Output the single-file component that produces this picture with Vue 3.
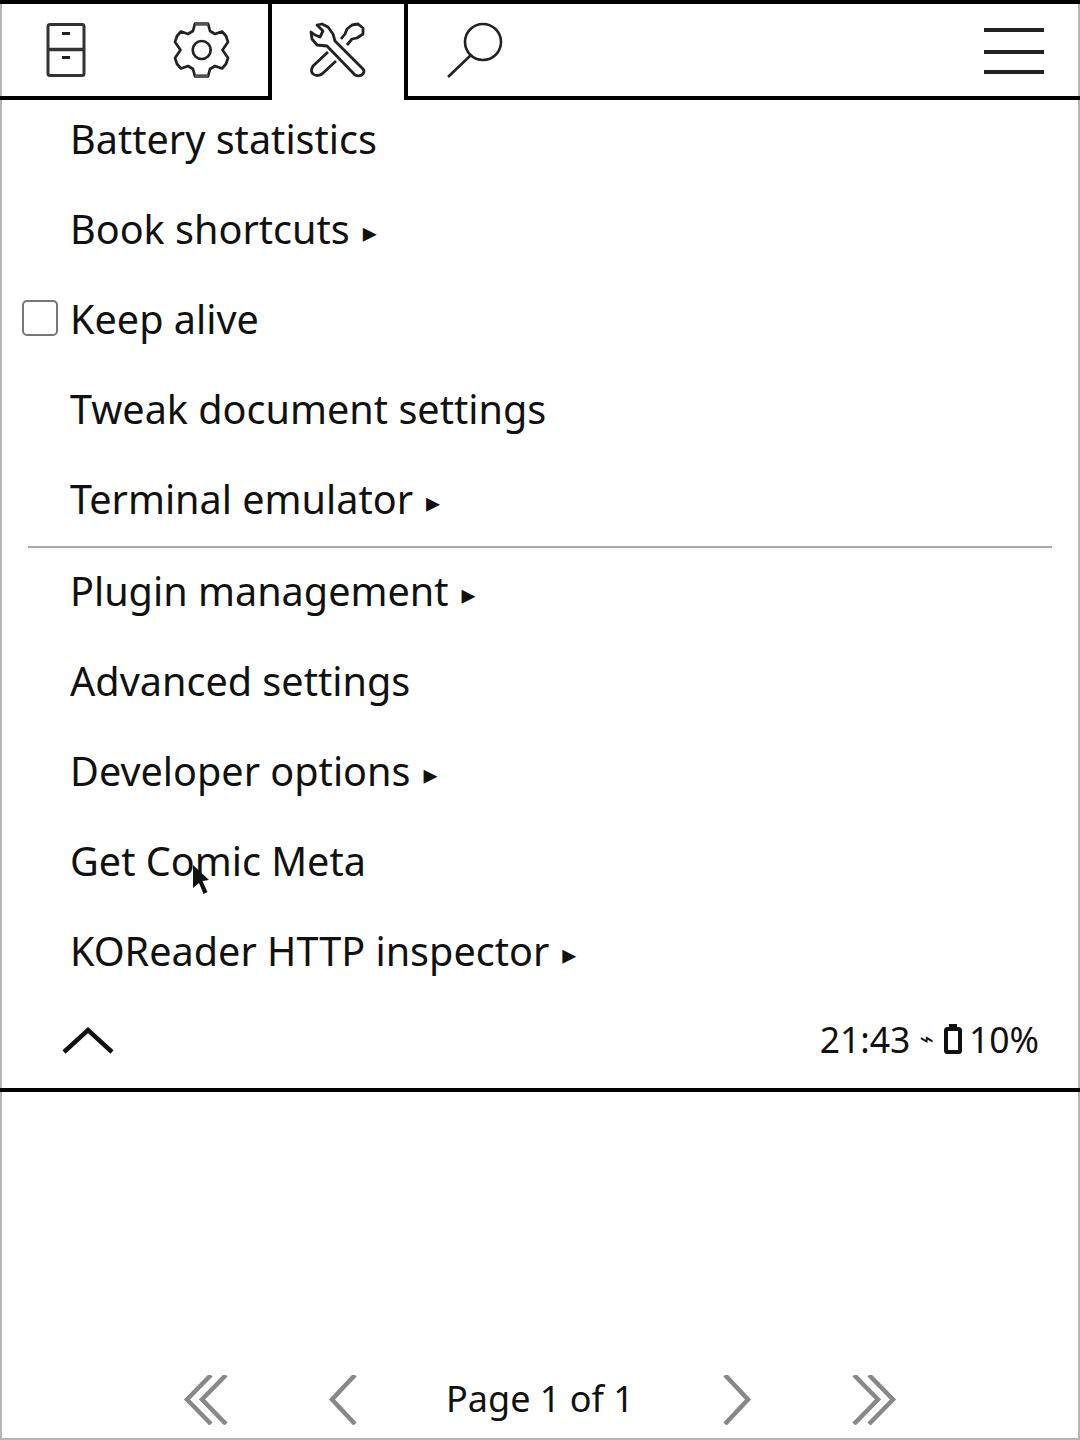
<template>
  <div class="screen">
    <div class="tabs">
      <div class="tab-group">
        <button class="tab" aria-label="File browser">
          <svg class="ico-file" width="42" height="56" viewBox="0 0 42 56" fill="none" stroke="#333" stroke-width="3" stroke-linejoin="round">
            <rect x="3" y="2.500" width="36" height="51" rx="2" />
            <path d="M3 27.500h36" stroke-width="3.500" />
            <path d="M17 11.500h8M17 35.500h8" stroke="#222" />
          </svg>
        </button>
        <button class="tab" aria-label="Settings">
          <svg class="ico-gear" width="76" height="70" viewBox="0 0 76 70" fill="none" stroke="#222" stroke-width="2.700" stroke-linejoin="round">
            <path d="M30 9.500H43L45 17 50 20 57 17.500 61 22 63 28 57.500 36 63 44 61 50 57 54.500 50 52 45 55 43 62.500H30L28 55 23 52 16 54.500 12 50 10 44 15.500 36 10 28 12 22 16 17.500 23 20 28 17Z" />
            <path d="M30 10h13M30 62h13" stroke="#555" stroke-width="3.500" />
            <circle cx="36.700" cy="36" r="9" />
          </svg>
        </button>
      </div>
      <button class="tab tab-active" aria-label="Tools">
        <svg class="ico-tools" width="76" height="70" viewBox="0 0 76 70" fill="none" stroke="#222" stroke-width="2.800" stroke-linejoin="round">
          <path d="M63 55 35 27 33 20 28 13 22 10 17 11 23 17 20 23 15 21 11 18 12 25 17 31 27 32 55 61Q60 63 63 60 65 57 63 55Z" />
          <path d="M41 25 45 20 47 15 52 11 58 10 63 14 63 20 57 24 52 25 47 31" />
          <path d="M28 38 13 52Q10 57 13 60 17 63 22 60L36 47" />
        </svg>
      </button>
      <div class="tab-rest">
        <button class="tab" aria-label="Search">
          <svg width="58" height="58" viewBox="0 0 58 58" fill="none" stroke="#222" stroke-width="2.600">
            <circle cx="37" cy="21" r="18" />
            <path d="M25 34L2 56" />
          </svg>
        </button>
        <button class="menu-btn" aria-label="Menu">
          <span></span>
          <span></span>
          <span></span>
        </button>
      </div>
    </div>

    <div class="menu">
      <template v-for="(group, g) in groups" :key="g">
        <div v-if="g > 0" class="sep"></div>
        <div v-for="item in group" :key="item.text" class="row">
          <span v-if="item.check" class="check"></span>
          <span class="label">{{ item.text }}</span>
          <span v-if="item.sub" class="sub">▸</span>
          <svg v-if="item.cursor" class="cursor" width="18" height="30" viewBox="0 0 18 30">
            <path d="M1 0l16 15-6.500 1 5 11-4 2-4.500-11L1 23z" fill="#111" />
          </svg>
        </div>
      </template>
      <div class="menu-foot">
        <svg width="52" height="28" viewBox="0 0 52 28" fill="none" stroke="#111" stroke-width="4.500">
          <path d="M2 26L26 4l24 22" />
        </svg>
        <div class="status">
          <span>21:43</span>
          <span class="plug">⌁</span>
          <svg width="18" height="30" viewBox="0 0 18 30" fill="none" stroke="#111" stroke-width="4">
            <path d="M5 2h8" />
            <rect x="2" y="5" width="14" height="23" rx="1.500" />
          </svg>
          <span>10%</span>
        </div>
      </div>
    </div>

    <div class="pager">
      <svg width="46" height="50" viewBox="0 0 46 50" fill="none" stroke="#888" stroke-width="4.500">
        <path d="M28 0L4 24.500 28 49M43 0L19 24.500 43 49" />
      </svg>
      <svg width="32" height="50" viewBox="0 0 32 50" fill="none" stroke="#888" stroke-width="4.500">
        <path d="M27 0L4 24.500 27 49" />
      </svg>
      <span class="page-text">Page 1 of 1</span>
      <svg width="32" height="50" viewBox="0 0 32 50" fill="none" stroke="#888" stroke-width="4.500">
        <path d="M5 0l23 24.500L5 49" />
      </svg>
      <svg width="46" height="50" viewBox="0 0 46 50" fill="none" stroke="#888" stroke-width="4.500">
        <path d="M3 0l24 24.500L3 49M18 0l24 24.500L18 49" />
      </svg>
    </div>
  </div>
</template>

<script setup>
const groups = [
  [
    { text: 'Battery statistics' },
    { text: 'Book shortcuts', sub: true },
    { text: 'Keep alive', check: true },
    { text: 'Tweak document settings' },
    { text: 'Terminal emulator', sub: true }
  ],
  [
    { text: 'Plugin management', sub: true },
    { text: 'Advanced settings' },
    { text: 'Developer options', sub: true },
    { text: 'Get Comic Meta', cursor: true },
    { text: 'KOReader HTTP inspector', sub: true }
  ]
]
</script>

<style>
html,
body {
  margin: 0;
  background: #fff;
}
</style>

<style scoped>
.screen {
  position: relative;
  width: 1080px;
  height: 1440px;
  display: flex;
  flex-direction: column;
  box-sizing: border-box;
  background: #fff;
  color: #111;
  font-family: "Noto Sans", sans-serif;
  overflow: hidden;
}

.screen::before {
  content: "";
  position: absolute;
  inset: 0;
  border: 2px solid #b5b5b5;
  border-top: none;
}

.tabs {
  position: relative;
  display: flex;
  height: 100px;
  box-sizing: border-box;
  border-top: 4px solid #000;
}

button {
  padding: 0;
  border: none;
  background: none;
  display: flex;
  align-items: center;
  justify-content: center;
}

.tab-group {
  display: flex;
  width: 272px;
  box-sizing: border-box;
  border-right: 4px solid #000;
  border-bottom: 4px solid #000;
}

.tab {
  width: 134px;
  height: 92px;
  flex: none;
}

.ico-file {
  margin-left: -2px;
}

.ico-gear {
  margin-left: 4px;
  margin-top: -2px;
  flex: none;
}

.ico-tools {
  margin-top: -6px;
  flex: none;
}

.tab-active {
  width: 132px;
  height: 96px;
}

.tab-rest {
  flex: 1;
  display: flex;
  justify-content: space-between;
  box-sizing: border-box;
  padding-right: 36px;
  border-left: 4px solid #000;
  border-bottom: 4px solid #000;
}

.tab-rest .tab {
  width: 134px;
}

.menu-btn {
  width: 60px;
  height: 92px;
  flex-direction: column;
  justify-content: flex-start;
  padding-top: 24px;
  box-sizing: border-box;
}

.menu-btn span {
  display: block;
  flex: none;
  width: 60px;
  height: 4px;
  background: #222;
  margin-bottom: 18px;
}

.menu-btn span:nth-child(2) {
  margin-bottom: 16px;
}

.menu {
  position: relative;
  margin-top: -6px;
  border-bottom: 4px solid #000;
}

.row {
  position: relative;
  height: 90px;
  display: flex;
  align-items: center;
  padding-left: 70px;
  font-size: 39.600px;
  white-space: nowrap;
}

.check {
  position: absolute;
  left: 22px;
  top: 26px;
  width: 36px;
  height: 36px;
  box-sizing: border-box;
  border: 2px solid #777;
  border-radius: 5px;
}

.sub {
  margin-left: 13px;
  font-family: "DejaVu Sans", sans-serif;
  font-size: 28px;
  position: relative;
  top: 3px;
}

.cursor {
  position: absolute;
  left: 192px;
  top: 49px;
}

.sep {
  height: 2px;
  margin: 2px 28px -2px;
  background: #aaa;
}

.menu-foot {
  height: 92px;
  display: flex;
  align-items: center;
  justify-content: space-between;
  box-sizing: border-box;
  padding: 0 41px 4px 62px;
}

.status {
  display: flex;
  align-items: center;
  font-size: 35.500px;
  margin-top: -2px;
}

.plug {
  margin: 0 10px 0 9px;
  font-family: "DejaVu Sans", sans-serif;
  font-size: 24px;
}

.status svg {
  margin-right: 7px;
}

.pager {
  margin-top: auto;
  height: 80px;
  display: flex;
  align-items: center;
  padding-left: 183px;
}

.pager svg {
  flex: none;
}

.pager svg:nth-child(1) {
  margin-right: 99px;
}

.page-text {
  width: 360px;
  text-align: center;
  font-size: 36px;
  margin-top: -3px;
}

.pager svg:nth-child(4) {
  margin-right: 99px;
}
</style>
